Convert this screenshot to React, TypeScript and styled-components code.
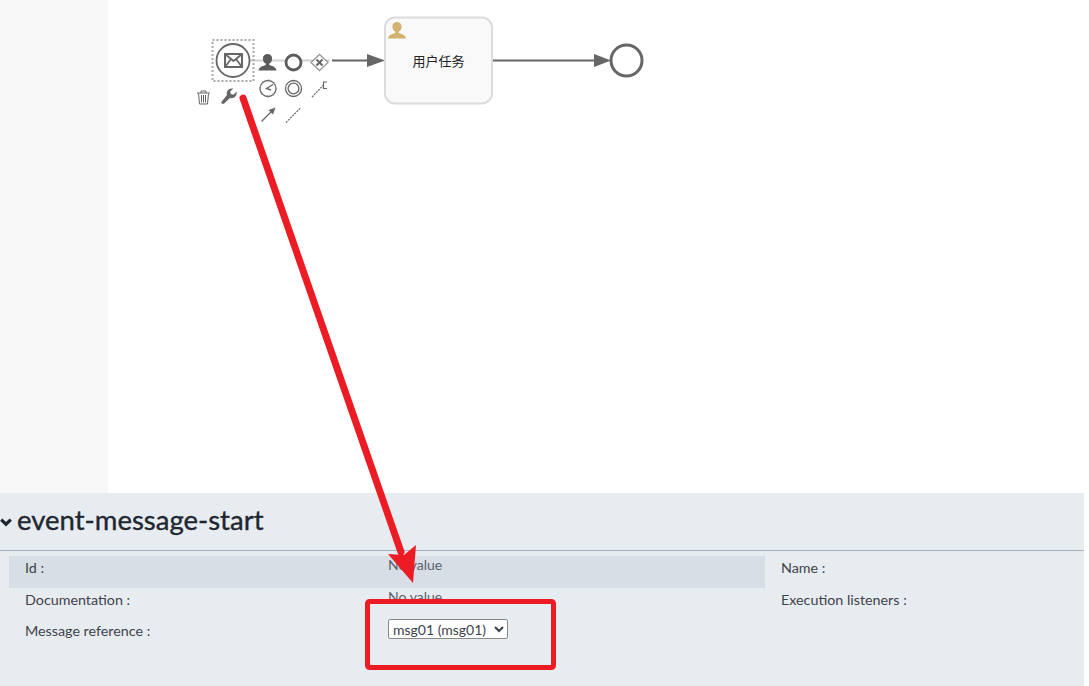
import React from 'react';
import styled, { createGlobalStyle } from 'styled-components';

const GlobalStyle = createGlobalStyle`
  html, body {
    margin: 0;
    padding: 0;
    background: #fff;
  }
  body {
    font-family: Lato, "Noto Sans CJK SC", sans-serif;
  }
`;

const Page = styled.div`
  position: relative;
  width: 1084px;
  height: 686px;
  display: flex;
  flex-direction: column;
  overflow: hidden;
`;

const Workspace = styled.div`
  display: flex;
  height: 493px;
`;

const Palette = styled.div`
  width: 108px;
  background: #f8f8f9;
`;

const Canvas = styled.div`
  flex: 1;
  background: #fff;

  svg {
    display: block;
  }
`;

const TaskLabel = styled.text`
  font-family: "Noto Sans CJK SC", sans-serif;
  font-size: 13px;
  fill: #222;
  text-anchor: middle;
`;

const Properties = styled.div`
  flex: 1;
  background: #e7ecf0;
`;

const Header = styled.div`
  height: 58px;
  box-sizing: border-box;
  border-bottom: 1px solid #a9aebc;
  display: flex;
  align-items: center;
  gap: 5px;
`;

const Title = styled.h2`
  margin: -4px 0 0;
  font-size: 27.5px;
  font-weight: 400;
  line-height: 57px;
  color: #1f2730;
  -webkit-text-stroke: 0.35px #1f2730;
`;

const Columns = styled.div`
  display: grid;
  grid-template-columns: 756px 1fr;
  padding: 5px 0 0 9px;
`;

const Column = styled.div`
  display: flex;
  flex-direction: column;
`;

const Row = styled.div<{ $active?: boolean }>`
  display: grid;
  grid-template-columns: 363px 1fr;
  height: 31.5px;
  padding-left: 16px;
  align-items: start;
  font-size: 14.3px;
  line-height: 23px;
  color: #3d434b;
  background: ${({ $active }) => ($active ? '#d7dee5' : 'transparent')};
`;

const Label = styled.span`
  font-weight: 400;
`;

const Value = styled.span`
  color: #5a626c;
  font-size: 14px;
  margin-top: -3px;
`;

const MessageSelect = styled.select`
  display: block;
  width: 120px;
  height: 20px;
  font-family: Lato, sans-serif;
  font-size: 14px;
  color: #3d434b;
  background: #fff;
  border: 1px solid #8a8a8a;
  border-radius: 2px;
  padding: 0;
`;

const Annotation = styled.svg`
  position: absolute;
  left: 0;
  top: 0;
  pointer-events: none;
`;

const Person = ({ x, y, fill }: { x: number; y: number; fill: string }) => (
  <path
    transform={`translate(${x} ${y})`}
    fill={fill}
    d="M-1.8 1.6C-3.8.4-4.6-1.6-4.6-3.6-4.6-6.4-2.6-8 0-8S4.6-6.4 4.6-3.6C4.6-1.6 3.8.4 1.8 1.6V3C3.8 4 8.4 4.4 9 8.6H-9C-8.4 4.4-3.8 4-1.8 3Z"
  />
);

const Diagram = () => (
  <svg width="976" height="493" viewBox="108 0 976 493">
    {/* sequence flows */}
    <path d="M250 60.5H330" stroke="#d2d2d2" strokeWidth="2" fill="none" />
    <path d="M332 60.5H368" stroke="#666" strokeWidth="2" fill="none" />
    <path d="M367 54L385 60.5L367 67Z" fill="#666" />
    <path d="M492 60.5H595" stroke="#666" strokeWidth="2" fill="none" />
    <path d="M594 54L611 60.5L594 67Z" fill="#666" />

    {/* selected start event */}
    <rect x="212.5" y="40" width="41" height="41" fill="none" stroke="#a8a8a8" strokeWidth="2" strokeDasharray="2 2" />
    <circle cx="233" cy="60.5" r="16.5" fill="#fff" stroke="#666" strokeWidth="1.8" />
    <rect x="225" y="54" width="17" height="13" fill="#fff" stroke="#666" strokeWidth="2" />
    <path d="M225 54L233.5 61L242 54M225 67L231 59M242 67L236 59" fill="none" stroke="#666" strokeWidth="1.8" />

    {/* task */}
    <rect x="385" y="17.5" width="107" height="86" rx="10" fill="#f9f9f9" stroke="#dcdcdc" strokeWidth="2" />
    <Person x={397} y={30} fill="#d1b26e" />
    <TaskLabel x="438.5" y="66">用户任务</TaskLabel>

    {/* end event */}
    <circle cx="626.5" cy="60.5" r="15.5" fill="#fff" stroke="#666" strokeWidth="3" />

    {/* context pad */}
    <Person x={267.5} y={62} fill="#5c5c5c" />
    <circle cx="293.5" cy="62.5" r="7.5" fill="#fff" stroke="#5c5c5c" strokeWidth="2.8" />
    <path d="M319.5 54.5L328 62.5L319.5 70.5L311 62.5Z" fill="#fff" stroke="#999" strokeWidth="1.3" />
    <path d="M316.5 59.5L322.5 65.5M322.5 59.5L316.5 65.5" stroke="#666" strokeWidth="2" />

    <g fill="none" stroke="#666">
      <path d="M197 93H210M201 93V91H206V93M198.5 93.5L199.5 104H207.5L208.5 93.5M201.5 95V102.5M203.5 95V102.5M205.5 95V102.5" strokeWidth="1" />
      <circle cx="268" cy="88.5" r="8" strokeWidth="1.3" />
      <circle cx="268" cy="88.5" r="8" strokeWidth="2" stroke="#888" strokeDasharray="1 5.3" />
      <path d="M273 84.5L266.5 88.5L271 90" strokeWidth="1.4" />
      <circle cx="293.5" cy="88.5" r="8" strokeWidth="1.3" />
      <circle cx="293.5" cy="88.5" r="5.4" strokeWidth="1.3" />
      <path d="M312 97L323 85.5" strokeWidth="1.2" strokeDasharray="2 1" />
      <path d="M327 82H323.5V88.5H327" strokeWidth="1.2" />
      <path d="M261.5 121.5L271 112" strokeWidth="1.2" />
      <path d="M286 122.5L301 107.5" strokeWidth="1.2" strokeDasharray="2 1" />
    </g>
    <path d="M268.5 110L275.5 107.5L273 114.5Z" fill="#666" />
    <path
      fill="#666"
      d="M221.2 102.2C221.6 103.8 223.2 104.4 224.2 103.4L229.8 98C232.3 98.8 235 97.6 236.2 95.2C236.8 94 236.8 92.9 236.5 91.8L233.5 94.8L230.9 94.1L230.2 91.5L233.2 88.7C230.6 88.1 228.1 89.3 227.1 91.6C226.6 92.9 226.6 94 227 95.1Z"
    />
  </svg>
);

const ChevronDown = () => (
  <svg width="12" height="9" viewBox="0 0 12 9" style={{ flex: 'none', marginTop: 2 }}>
    <path d="M1.2 1.6L6 6.2L10.8 1.6" fill="none" stroke="#1f2730" strokeWidth="3.2" />
  </svg>
);

export default function App() {
  return (
    <>
      <GlobalStyle />
      <Page>
        <Workspace>
          <Palette />
          <Canvas>
            <Diagram />
          </Canvas>
        </Workspace>
        <Properties>
          <Header>
            <ChevronDown />
            <Title>event-message-start</Title>
          </Header>
          <Columns>
            <Column>
              <Row $active>
                <Label>Id :</Label>
                <Value>No value</Value>
              </Row>
              <Row>
                <Label>Documentation :</Label>
                <Value>No value</Value>
              </Row>
              <Row>
                <Label>Message reference :</Label>
                <div>
                  <MessageSelect defaultValue="msg01">
                    <option value="msg01">msg01 (msg01)</option>
                  </MessageSelect>
                </div>
              </Row>
            </Column>
            <Column>
              <Row>
                <Label>Name :</Label>
              </Row>
              <Row>
                <Label>Execution listeners :</Label>
              </Row>
            </Column>
          </Columns>
        </Properties>
        {/* red callout drawn over the page */}
        <Annotation width="1084" height="686" viewBox="0 0 1084 686">
          <path d="M243 98L401 552" stroke="#ed1c24" strokeWidth="7" strokeLinecap="round" fill="none" />
          <path d="M413 583L388 554L404 555L416 545Z" fill="#ed1c24" />
          <rect x="367.5" y="601.5" width="186" height="66" rx="2" fill="none" stroke="#ed1c24" strokeWidth="5" />
        </Annotation>
      </Page>
    </>
  );
}
